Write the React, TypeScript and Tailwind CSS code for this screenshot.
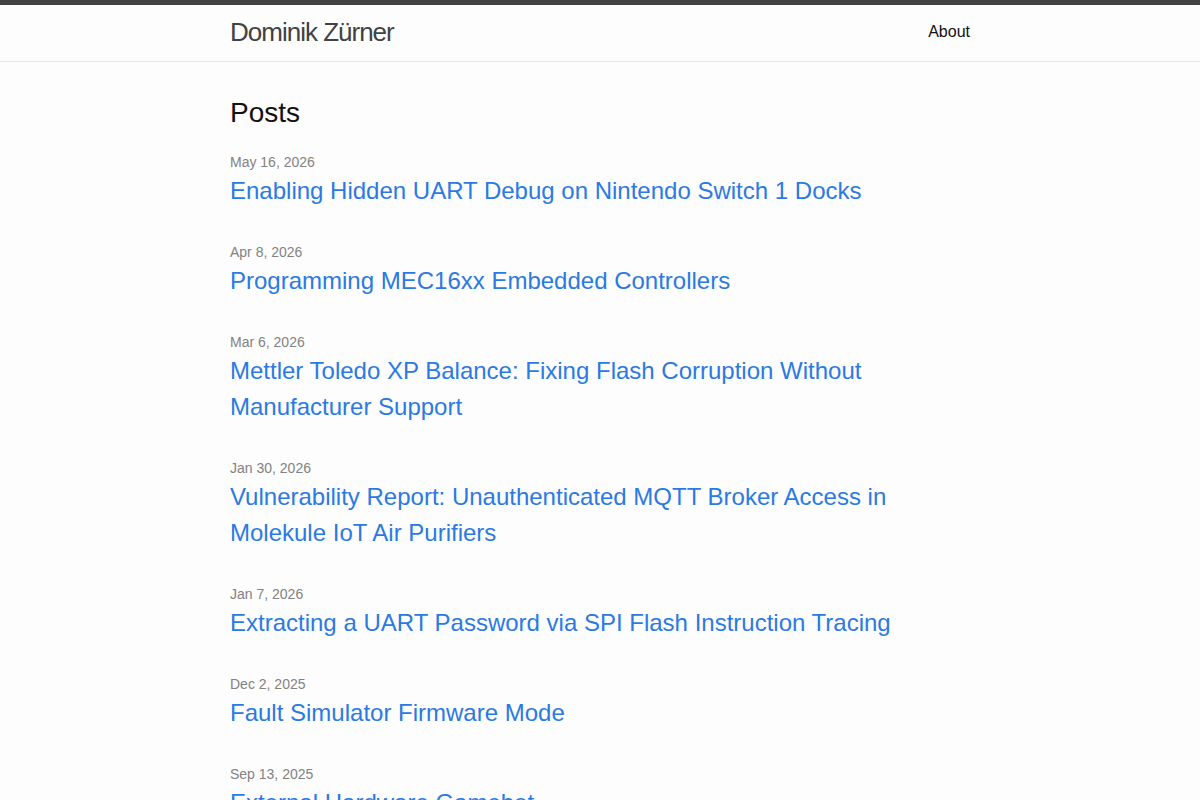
import React from 'react';

const posts = [
  { date: 'May 16, 2026', title: 'Enabling Hidden UART Debug on Nintendo Switch 1 Docks' },
  { date: 'Apr 8, 2026', title: 'Programming MEC16xx Embedded Controllers' },
  { date: 'Mar 6, 2026', title: 'Mettler Toledo XP Balance: Fixing Flash Corruption Without Manufacturer Support' },
  { date: 'Jan 30, 2026', title: 'Vulnerability Report: Unauthenticated MQTT Broker Access in Molekule IoT Air Purifiers' },
  { date: 'Jan 7, 2026', title: 'Extracting a UART Password via SPI Flash Instruction Tracing' },
  { date: 'Dec 2, 2025', title: 'Fault Simulator Firmware Mode' },
  { date: 'Sep 13, 2025', title: 'External Hardware Gamebot' },
];

const App: React.FC = () => {
  return (
    <div className="min-h-screen bg-[#fdfdfd] text-[#111] text-base leading-normal font-['Liberation_Sans',Arial,sans-serif]">
      <header className="border-t-[5px] border-t-[#424242] border-b border-b-[#e8e8e8] min-h-[62px]">
        <div className="mx-auto max-w-[740px] flex justify-between items-start">
          <a href="#" className="text-[26px] leading-[54px] font-light tracking-[-1px] text-[#424242]">
            Dominik Zürner
          </a>
          <nav>
            <a href="#" className="leading-[54px] text-[#111]">About</a>
          </nav>
        </div>
      </header>

      <main className="pt-[30px]">
        <div className="mx-auto max-w-[740px]">
          <h2 className="text-[28px] leading-[42px] mb-[18px]">Posts</h2>
          <ul>
            {posts.map(post => (
              <li key={post.date} className="mb-[33px]">
                <span className="block text-sm leading-[21px] text-[#828282]">{post.date}</span>
                <h3>
                  <a href="#" className="block text-2xl leading-9 text-[#2a7ae2]">{post.title}</a>
                </h3>
              </li>
            ))}
          </ul>
        </div>
      </main>
    </div>
  );
};

export default App;
